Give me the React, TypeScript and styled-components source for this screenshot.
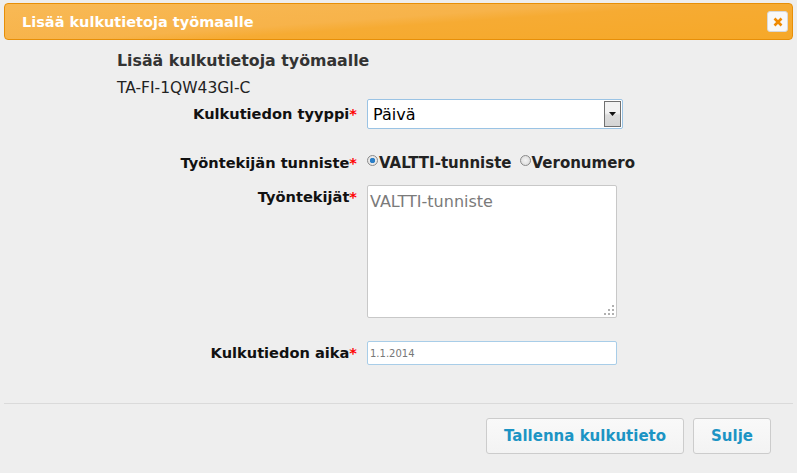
import React from 'react';
import styled, { createGlobalStyle } from 'styled-components';

const GlobalStyle = createGlobalStyle`
  html, body {
    margin: 0;
    padding: 0;
    background: #eeeeee;
  }
  body {
    font-family: 'DejaVu Sans', Verdana, sans-serif;
    color: #333333;
  }
`;

const Dialog = styled.div`
  width: 789px;
  height: 473px;
  margin: 0 4px;
  padding-top: 3px;
  box-sizing: border-box;
  display: flex;
  flex-direction: column;
`;

const TitleBar = styled.div`
  height: 37px;
  box-sizing: border-box;
  border: 1px solid #e78f08;
  border-radius: 4px;
  background: linear-gradient(176deg, #f8b955 0%, #f7b34a 45%, #f6ab33 55%, #f6a828 100%);
  display: flex;
  align-items: center;
  justify-content: space-between;
  padding: 0 4px 0 17px;
`;

const Title = styled.span`
  color: #ffffff;
  font-weight: bold;
  font-size: 14.5px;
`;

const CloseButton = styled.button`
  width: 21px;
  height: 21px;
  padding: 0;
  border: 1px solid #d8d8d8;
  border-radius: 3px;
  background: #f8f8f8;
  display: flex;
  align-items: center;
  justify-content: center;
`;

const Body = styled.div`
  padding: 11px 0 0 113px;
`;

const Heading = styled.div`
  font-size: 15.8px;
  font-weight: bold;
  color: #333333;
  line-height: 20px;
`;

const Code = styled.div`
  font-size: 15.5px;
  color: #222222;
  margin-top: 8px;
  line-height: 18px;
`;

const Form = styled.div`
  margin-left: -113px;
  display: flex;
  flex-direction: column;
`;

const Row = styled.div<{ $top?: boolean; $gap?: number }>`
  display: grid;
  grid-template-columns: 353px 1fr;
  column-gap: 10px;
  align-items: ${(p) => (p.$top ? 'start' : 'center')};
  margin-top: ${(p) => p.$gap ?? 0}px;
`;

const Label = styled.label<{ $offset?: number }>`
  text-align: right;
  font-weight: bold;
  font-size: 14.6px;
  color: #111111;
  line-height: 18px;
  margin-top: ${(p) => p.$offset ?? 0}px;
`;

const Req = styled.span`
  color: #ff0000;
`;

const SelectBox = styled.div`
  width: 256px;
  height: 30px;
  box-sizing: border-box;
  border: 1px solid #9ac3e4;
  border-radius: 2px;
  background: #ffffff;
  display: flex;
  align-items: stretch;
`;

const SelectValue = styled.span`
  flex: 1;
  display: flex;
  align-items: center;
  padding-left: 5px;
  font-size: 16px;
  color: #000000;
`;

const SelectArrow = styled.span`
  width: 17px;
  margin: 1px;
  box-sizing: border-box;
  border: 1px solid #707070;
  background: linear-gradient(#f2f2f2, #f2f2f2 45%, #dcdcdc 55%, #d4d4d4);
  display: flex;
  align-items: center;
  justify-content: center;
`;

const RadioGroup = styled.div`
  display: flex;
  align-items: center;
  gap: 8px;
`;

const RadioOption = styled.label`
  display: flex;
  align-items: center;
  font-weight: bold;
  font-size: 15px;
  color: #222222;
`;

const RadioDot = styled.span<{ $checked?: boolean }>`
  width: 9px;
  height: 9px;
  border-radius: 50%;
  border: 1px solid #8a8a8a;
  background: ${(p) =>
    p.$checked
      ? 'radial-gradient(circle, #2b7fc7 0 2.5px, #e8e8e8 3px)'
      : 'radial-gradient(circle, #f4f4f4, #d6d6d6)'};
  margin-right: 1px;
  margin-top: -6px;
`;

const TextArea = styled.div`
  width: 250px;
  height: 133px;
  box-sizing: border-box;
  border: 1px solid #c8c8c8;
  border-radius: 2px;
  background: #ffffff;
  padding: 6px 2px;
  font-size: 16px;
  color: #7a7a7a;
  position: relative;
`;

const Grip = styled.svg`
  position: absolute;
  right: 2px;
  bottom: 2px;
`;

const DateInput = styled.div`
  width: 250px;
  height: 24px;
  box-sizing: border-box;
  border: 1px solid #a8cde8;
  border-radius: 2px;
  background: #ffffff;
  padding-left: 2px;
  font-size: 10px;
  color: #777777;
  display: flex;
  align-items: center;
`;

const Divider = styled.div`
  margin-top: 38px;
  height: 1px;
  background: #dadada;
`;

const ButtonPane = styled.div`
  display: flex;
  justify-content: flex-end;
  gap: 9px;
  padding: 14px 22px 0 0;
`;

const Button = styled.button`
  height: 36px;
  box-sizing: border-box;
  padding: 0 17px;
  border: 1px solid #cccccc;
  border-radius: 3px;
  background: linear-gradient(#f9f9f9, #f3f3f3);
  color: #1c94c4;
  font-family: inherit;
  font-weight: bold;
  font-size: 15px;
`;

export default function App(): JSX.Element {
  return (
    <>
      <GlobalStyle />
      <Dialog>
        <TitleBar>
          <Title>Lisää kulkutietoja työmaalle</Title>
          <CloseButton aria-label="close">
            <svg width="10" height="10" viewBox="0 0 10 10">
              <path d="M1.5 1.5 L8.5 8.5 M8.5 1.5 L1.5 8.5" stroke="#f08a00" strokeWidth="2.6" />
            </svg>
          </CloseButton>
        </TitleBar>
        <Body>
          <Heading>Lisää kulkutietoja työmaalle</Heading>
          <Code>TA-FI-1QW43GI-C</Code>
          <Form>
            <Row $gap={2}>
              <Label>
                Kulkutiedon tyyppi<Req>*</Req>
              </Label>
              <SelectBox>
                <SelectValue>Päivä</SelectValue>
                <SelectArrow>
                  <svg width="7" height="4" viewBox="0 0 7 4">
                    <path d="M0 0 H7 L3.5 4 Z" fill="#111" />
                  </svg>
                </SelectArrow>
              </SelectBox>
            </Row>
            <Row $gap={25}>
              <Label>
                Työntekijän tunniste<Req>*</Req>
              </Label>
              <RadioGroup>
                <RadioOption>
                  <RadioDot $checked />
                  VALTTI-tunniste
                </RadioOption>
                <RadioOption>
                  <RadioDot />
                  Veronumero
                </RadioOption>
              </RadioGroup>
            </Row>
            <Row $top $gap={13}>
              <Label $offset={3}>
                Työntekijät<Req>*</Req>
              </Label>
              <TextArea>
                VALTTI-tunniste
                <Grip width="10" height="10" viewBox="0 0 10 10">
                  <g fill="#b0b0b0">
                    <rect x="8" y="0" width="2" height="2" />
                    <rect x="4" y="4" width="2" height="2" />
                    <rect x="8" y="4" width="2" height="2" />
                    <rect x="0" y="8" width="2" height="2" />
                    <rect x="4" y="8" width="2" height="2" />
                    <rect x="8" y="8" width="2" height="2" />
                  </g>
                </Grip>
              </TextArea>
            </Row>
            <Row $gap={23}>
              <Label>
                Kulkutiedon aika<Req>*</Req>
              </Label>
              <DateInput>1.1.2014</DateInput>
            </Row>
          </Form>
        </Body>
        <Divider />
        <ButtonPane>
          <Button>Tallenna kulkutieto</Button>
          <Button>Sulje</Button>
        </ButtonPane>
      </Dialog>
    </>
  );
}
